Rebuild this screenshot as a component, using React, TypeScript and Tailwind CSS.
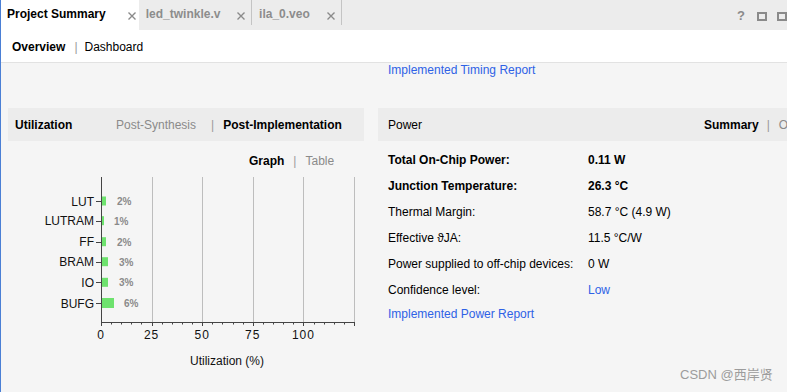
import React from "react";

const bars = [
  { name: "LUT", y: 29, w: 4, pct: "2%", lx: 109 },
  { name: "LUTRAM", y: 48.7, w: 2, pct: "1%", lx: 106 },
  { name: "FF", y: 69.7, w: 4, pct: "2%", lx: 109 },
  { name: "BRAM", y: 89.7, w: 6, pct: "3%", lx: 111 },
  { name: "IO", y: 110.3, w: 6, pct: "3%", lx: 111 },
  { name: "BUFG", y: 131, w: 12, pct: "6%", lx: 116, h: 10 },
];

const powerRows = [
  { label: "Total On-Chip Power:", value: "0.11 W", bold: true },
  { label: "Junction Temperature:", value: "26.3 °C", bold: true },
  { label: "Thermal Margin:", value: "58.7 °C (4.9 W)" },
  { label: "Effective ϑJA:", value: "11.5 °C/W" },
  { label: "Power supplied to off-chip devices:", value: "0 W" },
  { label: "Confidence level:", value: "Low", link: true },
];

function CloseX() {
  return (
    <svg width="8" height="8" viewBox="0 0 8 8" className="shrink-0">
      <path d="M0.5 0.5 L7.5 7.5 M7.5 0.5 L0.5 7.5" stroke="#8a8a8a" strokeWidth="1.4" />
    </svg>
  );
}

function UtilChart() {
  const x0 = 93;
  const unit = 2.024;
  const minor = [];
  for (let i = 0; i <= 25; i++) {
    const x = Math.round(x0 + i * 5 * unit) + 0.5;
    minor.push(
      <line key={`t${i}`} x1={x} x2={x} y1={150} y2={i % 5 === 0 ? 154 : 152.5} stroke="#444" strokeWidth="1" />
    );
  }
  const grid = [25, 50, 75, 100, 125].map((v) => Math.round(x0 + v * unit) + 0.5);
  return (
    <svg width="356" height="200" className="block">
      {grid.map((x) => (
        <line key={`g${x}`} x1={x} x2={x} y1={5} y2={150} stroke="#bdbdbd" strokeWidth="1" />
      ))}
      <line x1={x0 + 0.5} x2={x0 + 0.5} y1={5} y2={150.5} stroke="#444" strokeWidth="1" />
      <line x1={x0} x2={347} y1={150.5} y2={150.5} stroke="#444" strokeWidth="1" />
      {minor}
      {bars.map((b) => (
        <g key={b.name}>
          <line x1={88} x2={93} y1={Math.round(b.y) + 0.5} y2={Math.round(b.y) + 0.5} stroke="#444" strokeWidth="1" />
          <text x={86} y={b.y + 4.5} textAnchor="end" fontSize="12" fill="#111" fontFamily="Liberation Sans, Arial, sans-serif">
            {b.name}
          </text>
          <rect x={94} y={b.y - (b.h ?? 9) / 2} width={b.w} height={b.h ?? 9} fill="#6ee26e" />
          <text x={b.lx} y={b.y + 4} fontSize="10" fontWeight="bold" fill="#8a8a8a" fontFamily="Liberation Sans, Arial, sans-serif">
            {b.pct}
          </text>
        </g>
      ))}
      {[0, 25, 50, 75, 100].map((v) => (
        <text
          key={`l${v}`}
          x={x0 + v * unit}
          y={167}
          textAnchor="middle"
          fontSize="12"
          letterSpacing="1"
          fill="#111"
          fontFamily="Liberation Sans, Arial, sans-serif"
        >
          {v}
        </text>
      ))}
      <text x={219} y={193} textAnchor="middle" fontSize="12" fill="#111" fontFamily="Liberation Sans, Arial, sans-serif">
        Utilization (%)
      </text>
    </svg>
  );
}

export default function App() {
  return (
    <div className="relative w-[787px] h-[392px] overflow-hidden bg-[#f5f5f5] border-l border-[#4a7fd5] font-['Liberation_Sans',Arial,sans-serif] text-[12px] leading-[14px] text-black">
      {/* tab bar */}
      <div className="flex h-[30px] bg-[#ececec]">
        <div className="flex w-[141px] bg-white pl-[6px] pt-[7px]">
          <span className="font-bold">Project Summary</span>
          <span className="ml-[22px] mt-[5px]">
            <CloseX />
          </span>
        </div>
        <div className="flex w-[116px] h-[25px] border-r border-[#c4c4c4] pl-[7px] pt-[7px]">
          <span className="font-bold text-[#8c8c8c]">led_twinkle.v</span>
          <span className="ml-auto mr-[6px] mt-[5px]">
            <CloseX />
          </span>
        </div>
        <div className="flex w-[92px] h-[25px] border-r border-[#c4c4c4] pl-[7px] pt-[7px]">
          <span className="font-bold text-[#8c8c8c]">ila_0.veo</span>
          <span className="ml-auto mr-[6px] mt-[5px]">
            <CloseX />
          </span>
        </div>
        <div className="flex items-center ml-[395px] shrink-0 pt-[2px]">
          <span className="font-bold text-[13px] text-[#8a8a8a] w-[9px]">?</span>
          <span className="ml-[11px] w-[10px] h-[9px] border-2 border-[#8a8a8a] shrink-0" />
          <span className="ml-[10px] w-[10px] h-[9px] border-2 border-[#8a8a8a] shrink-0" />
        </div>
      </div>

      {/* sub tabs */}
      <div className="flex items-center h-[33px] bg-white border-b border-[#e2e2e2] pl-[11px] pt-[1px]">
        <span className="font-bold">Overview</span>
        <span className="ml-[9px] text-[#9a9a9a]">|</span>
        <span className="ml-[7px]">Dashboard</span>
      </div>

      {/* timing link */}
      <div className="pl-[387px] text-[#2e62e6]">Implemented Timing Report</div>

      {/* panels */}
      <div className="flex mt-[31px] pl-[7px]">
        <div className="w-[356px] shrink-0">
          <div className="flex items-center h-[33px] bg-[#ececec] pl-[7px]">
            <span className="font-bold w-[101px] shrink-0">Utilization</span>
            <span className="text-[#8a8a8a]">Post-Synthesis</span>
            <span className="ml-[15px] text-[#9a9a9a]">|</span>
            <span className="ml-[9px] font-bold">Post-Implementation</span>
          </div>
          <div className="flex mt-[13px] pl-[241px]">
            <span className="font-bold">Graph</span>
            <span className="ml-[9px] text-[#9a9a9a]">|</span>
            <span className="ml-[9px] text-[#8a8a8a]">Table</span>
          </div>
          <div className="mt-[4px]">
            <UtilChart />
          </div>
        </div>

        <div className="ml-[14px] w-[430px] shrink-0">
          <div className="flex items-center h-[33px] bg-[#ececec] pl-[10px] whitespace-nowrap">
            <span className="w-[316px] shrink-0">Power</span>
            <span className="font-bold shrink-0">Summary</span>
            <span className="ml-[8px] text-[#9a9a9a] shrink-0">|</span>
            <span className="ml-[9px] text-[#8a8a8a] shrink-0">On-Chip</span>
          </div>
          <div className="pt-[6px] pl-[10px]">
            {powerRows.map((r) => (
              <div key={r.label} className="flex items-center h-[26px]">
                <span className={`w-[200px] shrink-0 ${r.bold ? "font-bold" : ""}`}>{r.label}</span>
                <span className={`${r.bold ? "font-bold" : ""} ${r.link ? "text-[#2e62e6]" : ""}`}>{r.value}</span>
              </div>
            ))}
            <div className="mt-[4px] text-[#2e62e6]">Implemented Power Report</div>
          </div>
        </div>
      </div>

      <div className="absolute left-[679px] top-[366px] text-[13px] leading-[18px] text-[#9c9c9c] font-['Liberation_Sans','Noto_Sans_CJK_SC',sans-serif]">
        CSDN @西岸贤
      </div>
    </div>
  );
}
